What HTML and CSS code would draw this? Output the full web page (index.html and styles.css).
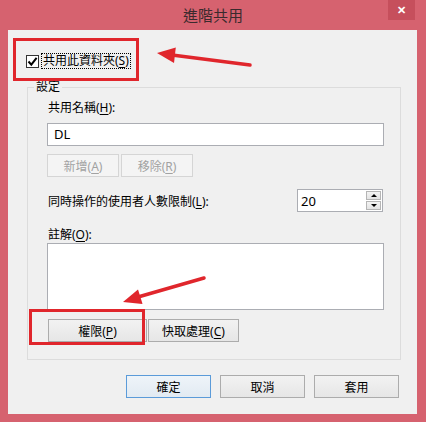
FILE: index.html
```html
<!DOCTYPE html>
<html lang="zh-Hant">
<head>
  <meta charset="UTF-8" />
  <title>進階共用</title>
  <link rel="stylesheet" href="styles.css">
</head>
<body>
  <div class="window">
    <div class="titlebar">
      <span class="title">進階共用</span>
      <span class="close">&#x2715;</span>
    </div>
    <div class="client">
      <div class="share-row">
        <span class="checkbox">
          <svg width="11" height="11" viewBox="0 0 11 11"><path d="M1.5 5.5 L4.3 8.6 L9.6 1.8" fill="none" stroke="#000" stroke-width="2"/></svg>
        </span>
        <span class="focus">共用此資料夾(<u>S</u>)</span>
      </div>
      <fieldset class="settings">
        <legend>設定</legend>
        <div class="group-body">
          <div class="label">共用名稱(<u>H</u>):</div>
          <div class="textbox">DL</div>
          <div class="button-row">
            <button class="btn disabled small">新增(<u>A</u>)</button>
            <button class="btn disabled small">移除(<u>R</u>)</button>
          </div>
          <div class="limit-row">
            <span>同時操作的使用者人數限制(<u>L</u>):</span>
            <div class="spinbox">
              <span>20</span>
              <div class="spin">
                <span class="spin-btn"><i class="tri up"></i></span>
                <span class="spin-btn"><i class="tri down"></i></span>
              </div>
            </div>
          </div>
          <div class="label comment-label">註解(<u>O</u>):</div>
          <div class="textarea"></div>
          <div class="button-row perm-row">
            <button class="btn wide">權限(<u>P</u>)</button>
            <button class="btn cache">快取處理(<u>C</u>)</button>
          </div>
        </div>
      </fieldset>
      <div class="dialog-buttons">
        <button class="btn dlg default">確定</button>
        <button class="btn dlg">取消</button>
        <button class="btn dlg">套用</button>
      </div>
    </div>

    <div class="mark mark-share"></div>
    <div class="mark mark-perm"></div>
    <svg class="arrows" width="426" height="422" viewBox="0 0 426 422">
      <line x1="250" y1="65" x2="172" y2="55" stroke="#e0262c" stroke-width="3.5" stroke-linecap="round"/>
      <polygon points="157,53 175.8,47.6 174,63" fill="#e0262c"/>
      <line x1="204" y1="278" x2="138" y2="297" stroke="#e0262c" stroke-width="3.5" stroke-linecap="round"/>
      <polygon points="123,302 138,289.6 142.6,304" fill="#e0262c"/>
    </svg>
  </div>
</body>
</html>
```

FILE: styles.css
```css
body {
  margin: 0;
  background: #d6626f;
  font-family: "Noto Sans", "Noto Sans CJK TC", sans-serif;
  font-size: 12px;
  color: #000;
}
u {
  text-decoration: underline;
  text-underline-offset: 2px;
}
.window {
  position: relative;
  width: 426px;
  height: 422px;
  background: #d6626f;
  overflow: hidden;
}
.titlebar {
  height: 30px;
  display: grid;
  grid-template-columns: 1fr auto 1fr;
}
.title {
  grid-column: 2;
  font-size: 15px;
  line-height: 30px;
  color: #3a2a2d;
}
.close {
  grid-column: 3;
  justify-self: end;
  width: 27px;
  height: 20px;
  margin-right: 11px;
  background: #c64f5c;
  color: #fff;
  font-size: 11px;
  font-weight: bold;
  line-height: 20px;
  text-align: center;
}
.client {
  margin-left: 8px;
  width: 409px;
  height: 384px;
  box-sizing: border-box;
  background: #f0f0f0;
  padding-top: 23px;
}
.share-row {
  height: 16px;
  display: flex;
  align-items: center;
  padding-left: 18px;
}
.checkbox {
  width: 11px;
  height: 11px;
  border: 1px solid #333;
  background: #fff;
  display: flex;
}
.focus {
  margin-left: 3px;
  padding: 0 1px;
  line-height: 14px;
  outline: 1px dotted #000;
}
.settings {
  margin: 11px 0 0 19px;
  width: 374px;
  box-sizing: border-box;
  border: 1px solid #dcdcdc;
  padding: 0;
}
.settings legend {
  margin-left: 6px;
  padding: 0 2px;
  line-height: 14px;
}
.group-body {
  padding: 6px 16px 17px 19px;
}
.label {
  line-height: 16px;
  padding-left: 1px;
}
.textbox {
  margin-top: 7px;
  height: 23px;
  box-sizing: border-box;
  border: 1px solid #abadb3;
  background: #fff;
  padding-left: 6px;
  font-size: 13px;
  line-height: 21px;
}
.button-row {
  display: flex;
  gap: 2px;
  margin-top: 8px;
}
.btn {
  height: 23px;
  box-sizing: border-box;
  border: 1px solid #acacac;
  background: linear-gradient(#f2f2f2, #e6e6e6);
  font-family: inherit;
  font-size: 12px;
  color: #000;
  padding: 0;
}
.btn.disabled {
  border-color: #d5d5d5;
  background: #f4f4f4;
  color: #a2a2a2;
}
.small {
  width: 72px;
}
.limit-row {
  display: flex;
  align-items: center;
  justify-content: space-between;
  margin-top: 12px;
  padding-left: 1px;
}
.spinbox {
  width: 86px;
  height: 23px;
  box-sizing: border-box;
  border: 1px solid #abadb3;
  background: #fff;
  display: flex;
  align-items: center;
  justify-content: space-between;
  padding: 0 1px 0 3px;
  font-size: 13px;
  margin-right: 1px;
}
.spin {
  display: flex;
  flex-direction: column;
  gap: 1px;
}
.spin-btn {
  width: 15px;
  height: 9px;
  box-sizing: border-box;
  border: 1px solid #b5b5b5;
  background: linear-gradient(#f4f4f4, #e3e3e3);
  display: flex;
  align-items: center;
  justify-content: center;
}
.tri {
  width: 0;
  height: 0;
  border-left: 3px solid transparent;
  border-right: 3px solid transparent;
}
.tri.up {
  border-bottom: 3px solid #000;
}
.tri.down {
  border-top: 3px solid #000;
}
.comment-label {
  margin-top: 15px;
}
.textarea {
  height: 67px;
  box-sizing: border-box;
  border: 1px solid #abadb3;
  background: #fff;
}
.perm-row {
  margin-top: 9px;
  padding-left: 1px;
  gap: 1px;
}
.wide {
  width: 99px;
}
.cache {
  width: 91px;
}
.dialog-buttons {
  display: flex;
  justify-content: flex-end;
  gap: 9px;
  margin-top: 15px;
  padding-right: 18px;
}
.dlg {
  width: 85px;
}
.dlg.default {
  border-color: #5b9bd9;
  background: linear-gradient(#eef4f9, #e2eaf2);
}
.mark {
  position: absolute;
  box-sizing: border-box;
  border: 3px solid #e0262c;
}
.mark-share {
  left: 13px;
  top: 38px;
  width: 126px;
  height: 43px;
}
.mark-perm {
  left: 29px;
  top: 309px;
  width: 116px;
  height: 36px;
}
.arrows {
  position: absolute;
  left: 0;
  top: 0;
  pointer-events: none;
}
```
